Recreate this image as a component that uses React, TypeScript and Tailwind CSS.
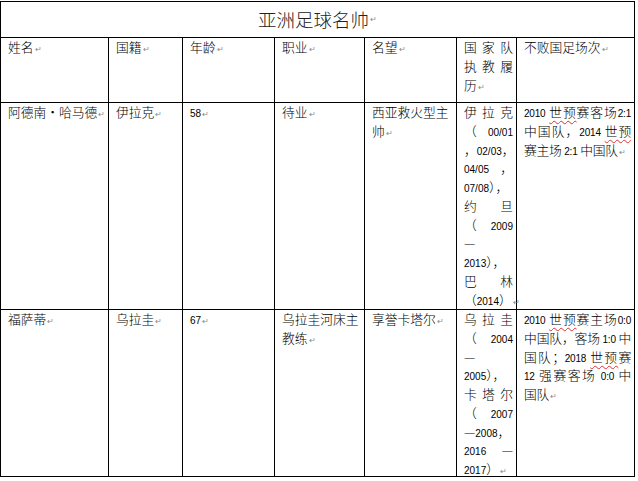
import React from 'react';

// Word-style table: "亚洲足球名帅"
const LATIN = "font-['Liberation_Sans',sans-serif] text-[10px] leading-none";

function Mark() {
    return <span className="font-['DejaVu_Sans',sans-serif] text-[8px] leading-none text-[#8a8a8a] ml-px">↵</span>;
}

// splits ascii runs (smaller western font) and {..} spell-check runs
function Rich({ s }: { s: string }) {
    const chunks = s.split(/(\{[^}]+\})/);
    return (
        <>
            {chunks.map((c, i) => {
                if (!c) return null;
                if (c.startsWith('{')) {
                    return (
                        <span key={i} className="underline decoration-wavy decoration-[#e03030] decoration-1 underline-offset-[3px]">
                            {c.slice(1, -1)}
                        </span>
                    );
                }
                return c.split(/([\x20-\x7e]+)/).map((p, k) =>
                    !p ? null : /[\x20-\x7e]/.test(p) ? (
                        <span key={i + '-' + k} className={LATIN}>{p}</span>
                    ) : (
                        <span key={i + '-' + k}>{p}</span>
                    )
                );
            })}
        </>
    );
}

type Line = { s: string; j?: boolean };

function Lines({ lines }: { lines: Line[] }) {
    return (
        <>
            {lines.map((l, i) => (
                <div key={i} className={l.j ? 'whitespace-nowrap [text-align-last:justify] text-justify' : 'whitespace-nowrap'}>
                    <Rich s={l.s} />
                    {i === lines.length - 1 && <Mark />}
                </div>
            ))}
        </>
    );
}

function Cell({ lines, className = '' }: { lines: Line[]; className?: string }) {
    return (
        <div className={`border-r border-b border-black pl-[7px] pr-[3px] ${className}`}>
            <Lines lines={lines} />
        </div>
    );
}

const one = (s: string): Line[] => [{ s }];

const header: Line[][] = [
    one('姓名'),
    one('国籍'),
    one('年龄'),
    one('职业'),
    one('名望'),
    [{ s: '国家队', j: true }, { s: '执教履', j: true }, { s: '历' }],
    one('不败国足场次'),
];

const rows: Line[][][] = [
    [
        one('阿德南·哈马德'),
        one('伊拉克'),
        one('58'),
        one('待业'),
        [{ s: '西亚救火型主' }, { s: '帅' }],
        [
            { s: '伊拉克', j: true },
            { s: '（ 00/01', j: true },
            { s: '，02/03，' },
            { s: '04/05 ，', j: true },
            { s: '07/08），' },
            { s: '约旦', j: true },
            { s: '（ 2009', j: true },
            { s: '—' },
            { s: '2013），' },
            { s: '巴林', j: true },
            { s: '（2014）' },
        ],
        [
            { s: '2010 {世预}赛客场2:1', j: true },
            { s: '中国队，2014 {世预}', j: true },
            { s: '赛主场 2:1 中国队' },
        ],
    ],
    [
        one('福萨蒂'),
        one('乌拉圭'),
        one('67'),
        [{ s: '乌拉圭河床主' }, { s: '教练' }],
        one('享誉卡塔尔'),
        [
            { s: '乌拉圭', j: true },
            { s: '（ 2004', j: true },
            { s: '—' },
            { s: '2005），' },
            { s: '卡塔尔', j: true },
            { s: '（ 2007', j: true },
            { s: '—2008，' },
            { s: '2016 —', j: true },
            { s: '2017）' },
        ],
        [
            { s: '2010 {世预}赛主场0:0', j: true },
            { s: '中国队，客场 1:0 中', j: true },
            { s: '国队；2018 {世预}赛', j: true },
            { s: '12 强赛客场 0:0 中', j: true },
            { s: '国队' },
        ],
    ],
];

export default function App() {
    return (
        <div className="w-[638px] h-[481px] bg-white text-black font-['Noto_Sans_CJK_SC',sans-serif] font-light text-[12.75px] leading-[18.75px] overflow-hidden">
            <div className="mt-px w-[635px] border-l border-t border-black grid grid-cols-[108px_74px_92px_90px_92px_60px_118px] grid-rows-[36px_65px_207px_167px]">
                <div className="col-span-7 border-r border-b border-black flex items-center justify-center text-[18.5px] text-[#222]">
                    亚洲足球名帅<Mark />
                </div>
                {header.map((h, i) => (
                    <Cell key={'h' + i} lines={h} />
                ))}
                {rows.map((r, ri) =>
                    r.map((c, ci) => (
                        <Cell key={ri + '-' + ci} lines={c} className={ci === 6 ? 'pr-[2px] tracking-[-0.2px]' : ''} />
                    ))
                )}
            </div>
        </div>
    );
}
